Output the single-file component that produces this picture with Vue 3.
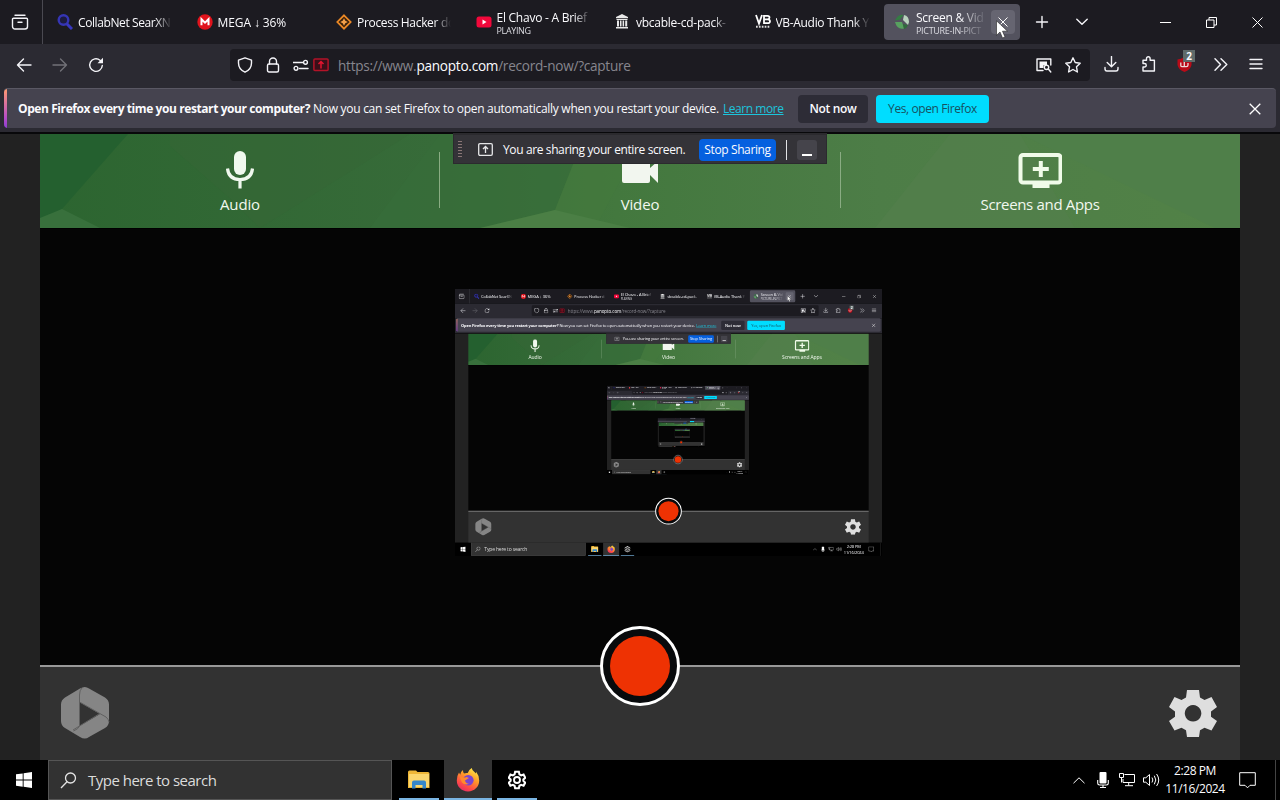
<script setup>
defineOptions({ name: 'DesktopScreen' })
const props = defineProps({ depth: { type: Number, default: 0 } })

const tabs = [
  { id: 'search', title: 'CollabNet SearXN', cls: 't-search' },
  { id: 'mega', title: 'MEGA ↓ 36%', cls: 't-mega' },
  { id: 'hacker', title: 'Process Hacker do', cls: 't-hacker' },
  { id: 'tube', title: 'El Chavo - A Brief', sub: 'PLAYING', cls: 't-tube' },
  { id: 'archive', title: 'vbcable-cd-pack-', cls: 't-archive' },
  { id: 'vb', title: 'VB-Audio Thank Y', cls: 't-vb' },
  { id: 'pan', title: 'Screen & Vid', sub: 'PICTURE-IN-PICT', cls: 't-pan', active: true },
]
</script>

<template>
  <div class="screen">
    <header class="tabbar">
      <div class="view">
        <svg width="18" height="18" viewBox="0 0 18 18" class="ln"><path d="M4 2.2h10M2.5 5.2h13a1 1 0 0 1 1 1v7.3a2.5 2.5 0 0 1-2.500 2.500h-10a2.500 2.500 0 0 1-2.500-2.500V6.200a1 1 0 0 1 1-1zM7 9.200h4" /></svg>
      </div>
      <div class="tabs">
        <div v-for="t in tabs" :key="t.id" class="tab" :class="{ active: t.active }">
          <svg class="fav" width="16" height="16" viewBox="0 0 16 16">
            <template v-if="t.id === 'search'">
              <circle cx="6.500" cy="6" r="4.800" fill="#1c1b40" stroke="#3535b4" stroke-width="2.400" /><path d="M10 10l5 5" stroke="#3838c0" stroke-width="3" />
            </template>
            <template v-else-if="t.id === 'mega'">
              <circle cx="8" cy="8" r="7.700" fill="#e0131c" /><path d="M4.500 11.300V5.200L8 8.600l3.500-3.400v6.100" fill="none" stroke="#fff" stroke-width="2" />
            </template>
            <template v-else-if="t.id === 'hacker'">
              <path d="M8 1.300L14.700 8 8 14.700 1.300 8z" fill="#3a210b" stroke="#ee8a26" stroke-width="1.700" /><path d="M8 4.200L9.300 6.700 11.800 8 9.300 9.300 8 11.800 6.700 9.300 4.200 8 6.700 6.700z" fill="#f3a04a" />
            </template>
            <template v-else-if="t.id === 'tube'">
              <rect x=".5" y="2.500" width="15" height="11" rx="2.500" fill="#f2083b" /><path d="M6.500 5.500v5l4-2.500z" fill="#fff" />
            </template>
            <template v-else-if="t.id === 'archive'">
              <path d="M7 0L13 3v1.200H1V3zM1.500 5h11v1h-11zM2 6.500h2v6H2zM5 6.500h1.500v6H5zM7.600 6.500h1.500v6H7.600zM10.200 6.500h2v6h-2zM1 13h12v1.500H1z" fill="#e8e8e8" />
            </template>
            <template v-else-if="t.id === 'vb'">
              <path d="M1 1l3 8.500L7 1M9 1.800h3.500q2 0 2 1.600T12.500 5.300H9M12.500 5.300q2.500 0 2.500 2T12.500 9.200H9V1" fill="none" stroke="#fff" stroke-width="1.800" /><path d="M1 12.800h14" stroke="#ddd" stroke-width="2" stroke-dasharray="1.700 1.200" />
            </template>
            <template v-else>
              <path d="M1 6.500Q4 0 9.500 1L6 5.500z" fill="#347c43" /><path d="M10 1q5 1 5 7l-1 3-5-5z" fill="#b9d2bd" /><path d="M1 8l7 0 2 6.500Q3 16 1 8z" fill="#57a15f" /><path d="M9 10l5 1q-1 3-4 4z" fill="#2f6b3b" />
            </template>
          </svg>
          <div class="lbl" :class="t.cls"><span class="ttl">{{ t.title }}</span><span v-if="t.sub" class="sub">{{ t.sub }}</span></div>
          <div v-if="t.active" class="tclose">
            <svg width="10" height="10" viewBox="0 0 10 10" class="thin"><path d="M.5.5l9 9M9.500.5l-9 9" /></svg>
          </div>
        </div>
      </div>
      <div class="tabtools">
        <svg width="14" height="14" viewBox="0 0 14 14" class="ln"><path d="M7 1.500v11M1.500 7h11" /></svg>
        <svg width="12" height="8" viewBox="0 0 12 8" class="ln"><path d="M.8 1.200L6 6.200l5.200-5" /></svg>
      </div>
      <div class="win">
        <svg width="11" height="11" viewBox="0 0 11 11" class="thin"><path d="M0 5.500h11" /></svg>
        <svg width="11" height="11" viewBox="0 0 11 11" class="thin"><path d="M.5 3h7.500v7.500H.5zM3 3V.5h7.500V8H8" /></svg>
        <svg width="11" height="11" viewBox="0 0 11 11" class="thin"><path d="M.5.5l10 10M10.500.5l-10 10" /></svg>
      </div>
    </header>

    <nav class="nav">
      <div class="navl">
        <svg width="16" height="16" viewBox="0 0 16 16" class="ln"><path d="M15 8H1.500M7.500 2L1.500 8l6 6" /></svg>
        <svg width="16" height="16" viewBox="0 0 16 16" class="ln dim"><path d="M1 8h13.500M8.500 2l6 6-6 6" /></svg>
        <svg width="16" height="16" viewBox="0 0 16 16" class="ln"><path d="M14.300 8.500A6.300 6.300 0 1 1 12 3.200l2 2" /><path d="M15 .8v5.500H9.500z" class="fill" /></svg>
      </div>
      <div class="url">
        <div class="uicons">
          <svg width="16" height="16" viewBox="0 0 16 16" class="ln"><path d="M8 .8l6.500 2.300V6c0 4-2.300 7.300-6.500 9.200C3.800 13.300 1.500 10 1.500 6V3.100z" /></svg>
          <svg width="14" height="16" viewBox="0 0 14 16" class="ln"><rect x="1.500" y="7" width="11" height="8" rx="1.500" /><path d="M3.500 7V4.500a3.500 3.500 0 0 1 7 0V7" /></svg>
          <svg width="16" height="12" viewBox="0 0 16 12" class="ln"><path d="M0 3.500h10M6.500 9.500H15" /><circle cx="12.500" cy="3.300" r="1.900" /><circle cx="3" cy="9.300" r="1.900" /></svg>
          <svg width="16" height="14" viewBox="0 0 16 14"><rect x=".9" y=".9" width="14.200" height="11.500" rx="1" fill="#3b0f19" stroke="#b31328" stroke-width="1.500" /><path d="M8 10.500V3.500M5.500 6L8 3.500 10.500 6" fill="none" stroke="#e3152f" stroke-width="1.500" /></svg>
        </div>
        <div class="address">https://www.<b>panopto.com</b>/record-now/?capture</div>
        <div class="uend">
          <svg width="16" height="16" viewBox="0 0 16 16" class="ln"><path d="M7 13.500H1V2h13.800v6" /><path d="M3.500 4.500H11v3.700H7.500V11h-4z" class="fill" /><circle cx="10.500" cy="10.300" r="2.200" /><path d="M12.300 12l2.500 3" /></svg>
          <svg width="16" height="16" viewBox="0 0 16 16" class="ln"><path d="M8 .8l2.200 4.700 5 .7-3.700 3.600.9 5.200L8 12.500 3.600 15l.9-5.200L.8 6.200l5-.7z" /></svg>
        </div>
      </div>
      <div class="navr">
        <svg width="15" height="16" viewBox="0 0 15 16" class="ln"><path d="M7.500.5v10M3.200 6.500l4.300 4.300 4.300-4.300M1 11.500v1.300q0 2.200 2 2.200h9q2 0 2-2.200v-1.300" /></svg>
        <svg width="15" height="16" viewBox="0 0 15 16" class="ln"><path d="M2 4.200h3.500V2.500a1.800 1.800 0 0 1 3.600 0v1.700h4.300V15H2v-4h1.500a1.700 1.700 0 0 0 0-3.500H2z" /></svg>
        <div class="ublock">
          <svg width="15" height="15" viewBox="0 0 15 15"><path d="M7.500 0Q11 2 14.500 2.500V8q-1 5-7 7-6-2-7-7V2.500Q4 2 7.500 0z" fill="#b90b18" /><path d="M3.800 5.500v3q0 1.200 1.500 1.200h4q1.700 0 1.700-1.700V6M7.300 5v4" fill="none" stroke="#eedada" stroke-width="1.300" /></svg>
          <span class="badge">2</span>
        </div>
        <svg width="14" height="13" viewBox="0 0 14 13" class="ln"><path d="M1 .7l5.500 5.800L1 12.300M7 .7l5.800 5.800L7 12.300" /></svg>
        <svg width="14" height="12" viewBox="0 0 14 12" class="ln"><path d="M1 1.500h12M1 6h12M1 10.500h12" /></svg>
      </div>
    </nav>

    <div class="notice">
      <div class="box">
        <strong class="nb">Open Firefox every time you restart your computer?</strong>
        <span class="nt">Now you can set Firefox to open automatically when you restart your device.</span>
        <a class="nl">Learn more</a>
        <button class="btn no"><span>Not now</span></button>
        <button class="btn yes"><span>Yes, open Firefox</span></button>
        <svg class="nx" width="12" height="12" viewBox="0 0 12 12"><path d="M.7.7l10.600 10.600M11.300.7L.7 11.300" /></svg>
      </div>
    </div>

    <main class="page">
      <section class="sources">
        <svg class="facets" viewBox="0 0 1200 94" preserveAspectRatio="none">
          <defs><linearGradient id="greens"><stop offset="0" stop-color="#2c6530" /><stop offset=".33" stop-color="#376b39" /><stop offset=".48" stop-color="#43783e" /><stop offset=".7" stop-color="#4d7d47" /><stop offset="1" stop-color="#528247" /></linearGradient></defs>
          <path d="M0 0h1200v94H0z" fill="url(#greens)" />
          <path d="M0 0h88L22 75 0 94z" fill="#24602f" />
          <path d="M0 94V84L22 75 60 94z" fill="#38703c" />
          <path d="M130 12L185 60 220 94 370 0H130z" fill="#356636" opacity=".5" />
          <path d="M400 0h145L515 76 440 94H330z" fill="#376d3a" opacity=".8" />
          <path d="M515 76L545 0h60l-50 94h-95z" fill="#457a3d" opacity=".6" />
          <path d="M515 76L590 94H440z" fill="#4b7f45" />
          <path d="M910 0L835 94h200L980 0z" fill="#527f4b" opacity=".7" />
          <path d="M980 0L1175 94H1200V0z" fill="#4f7f49" />
        </svg>
        <div class="source">
          <svg width="28" height="38" viewBox="0 0 28 38"><rect x="8" y="0" width="12" height="24" rx="6" fill="#f0f8ee" /><path d="M1.500 17.500q1 11 12.500 11t12.500-11M14 28v9.500" fill="none" stroke="#f0f8ee" stroke-width="3.200" /></svg>
          <span class="s1">Audio</span>
        </div>
        <div class="source">
          <svg width="36" height="38" viewBox="0 0 36 38"><path d="M2 7h24q2 0 2 2v8l8-7v22l-8-8v6q0 2-2 2H2q-2 0-2-2V9q0-2 2-2z" fill="#f2f6ef" /></svg>
          <span class="s2">Video</span>
        </div>
        <div class="source">
          <svg width="44" height="38" viewBox="0 0 44 38"><rect x="2.500" y="4" width="40" height="27.500" rx="2.500" fill="none" stroke="#f0fbe9" stroke-width="4" /><path d="M14.500 31h17v6h-17zM20.800 10h4v6h6v4h-6v6h-4v-6h-6v-4h6z" fill="#f0fbe9" /></svg>
          <span class="s3">Screens and Apps</span>
        </div>
      </section>
      <section class="preview">
        <div v-if="props.depth < 4" class="mirror"><DesktopScreen class="shrunk" :depth="props.depth + 1" /></div>
      </section>
      <footer class="controls">
        <svg width="50" height="54" viewBox="0 0 50 54"><path d="M20 2.500q5-3 9 0L45 11.500q4 2.500 4 7V35q0 4.500-4 7L29 51q-4 3-9 0L5 42q-4-2.500-4-7V18.500q0-4.500 4-7z" fill="#858585" /><path d="M19.500 16v24L40 28z" fill="#323232" /><path d="M22 2q-2.500 2-2.500 7v31q-1 3-6 5M19.500 16L46 31q2.500 2 3 5M39 28L13 44" fill="none" stroke="#606060" stroke-width="1" /></svg>
        <svg width="48" height="48" viewBox="0 0 48 48"><path fill-rule="evenodd" d="M18 1h12l1 7.500 4.500 2.600 7-3L48 18l-6 4.600v5.200L48 32l-5.500 9.500-7-2.800L31 41.300 30 48H18l-1-6.700-4.500-2.600-7 2.800L0 32l6-4.200v-5.200L0 18 5.500 8.100l7 3L17 8.500zM24 16a8.300 8.300 0 1 0 .1 0z" fill="#dedede" /></svg>
        <div class="rec"><i></i></div>
      </footer>

      <div class="sharing">
        <span class="grip"></span>
        <svg width="15" height="13" viewBox="0 0 15 13"><path d="M2 .7h11q1.300 0 1.300 1.300v9q0 1.300-1.300 1.300H2Q.7 12.300.7 11V2Q.7.7 2 .7zM7.500 10V3.500M5 6l2.500-2.500L10 6" fill="none" stroke="#e6e6e8" stroke-width="1.300" /></svg>
        <span class="stext">You are sharing your entire screen.</span>
        <button class="stop"><span>Stop Sharing</span></button>
        <span class="sep"></span>
        <span class="min"></span>
      </div>
    </main>

    <footer class="task">
      <div class="start"><svg width="16" height="16" viewBox="0 0 16 16"><path d="M0 2.300L6.700 1.400v6.200H0zM7.600 1.200L16 0v7.600H7.600zM0 8.500h6.700v6.200L0 13.800zM7.600 8.500H16V16l-8.400-1.200z" fill="#fff" /></svg></div>
      <div class="search">
        <svg width="17" height="17" viewBox="0 0 17 17"><circle cx="10.500" cy="6" r="5" fill="none" stroke="#e4e4e4" stroke-width="1.300" /><path d="M7 9.700L1 16" stroke="#e4e4e4" stroke-width="1.300" /></svg>
        <span>Type here to search</span>
      </div>
      <div class="apps">
        <div class="app">
          <svg width="22" height="20" viewBox="0 0 22 20"><path d="M0 2q0-1.500 1.500-1.500H8L9.500 2H20q1.500 0 1.500 1.500V18H0z" fill="#eeb637" /><path d="M1 4h20v13H1z" fill="#fbd66e" /><path d="M4 18.500v-6q0-2 2-2h10q2 0 2 2v6h-3.500V15h-7v3.500z" fill="#3687cb" /></svg>
        </div>
        <div class="app on">
          <svg width="24" height="24" viewBox="0 0 24 24">
            <defs><linearGradient id="fox" x1=".8" y1="0" x2=".25" y2="1"><stop offset="0" stop-color="#fff04c" /><stop offset=".4" stop-color="#ff9b28" /><stop offset=".75" stop-color="#ff4b47" /><stop offset="1" stop-color="#e42a67" /></linearGradient></defs>
            <path d="M12 23.500A11 11 0 0 1 .8 12.500Q.7 8 3 4.500l1.200 2.300Q4.600 3.500 7 2q-.2 2.200 1 3.500 1.500-.8 3.700-.5 1-3.200 4-5 .3 2 2.500 3.800L20 5.500q.2-1 0-2 3.200 4 3.200 9A11 11 0 0 1 12 23.500z" fill="url(#fox)" />
            <circle cx="12.300" cy="12.300" r="5.300" fill="#7a45d0" /><path d="M4 8q3 2.500 6.500 1l2.500 1-4 2.500q.5 3 4 3.300-4 2-7-1.300-2-3-2-6.500z" fill="#ff8a2d" />
          </svg>
        </div>
        <div class="app">
          <svg width="18" height="20" viewBox="0 0 48 50"><path fill="none" stroke="#fff" stroke-width="5.500" d="M19 3h10l1.500 7 4.500 2.600 6.500-2.300L46 19l-5 4.600v3.800L46 32l-4.500 8-6.500-2.200-4.500 2.600L29 47H19l-1.500-6.600-4.500-2.600L6.500 40 2 32l5-4.600v-3.800L2 19l4.500-8.700 6.500 2.300 4.500-2.600z" /><circle cx="24" cy="25" r="8" fill="none" stroke="#fff" stroke-width="5" /></svg>
        </div>
      </div>
      <div class="tray">
        <svg class="thin c1" width="12" height="7" viewBox="0 0 12 7"><path d="M.5 6.200L6 .8l5.500 5.400" /></svg>
        <svg class="c2" width="12" height="16" viewBox="0 0 12 16"><rect x="2.500" y="0" width="7" height="11.500" rx="1" fill="#fff" /><path d="M.7 8v3.300q0 1.700 2 1.700h6.600q2 0 2-1.700V8M6 13v3M3 15.500h6" fill="none" stroke="#fff" stroke-width="1.100" /></svg>
        <svg class="thin c3" width="16" height="14" viewBox="0 0 16 14"><path d="M5.500 1.500h10v8H4V6M6 12.700h8M9.700 9.500v3M.5.5h4v4h-4zM2.500 4.500v5" /></svg>
        <svg class="thin c4" width="17" height="14" viewBox="0 0 17 14"><path d="M.5 4.800h2.300L6.500 1.500v11L2.800 9.200H.5zM9 4.500q1.700 2.500 0 5M11.300 2.700q3 4.300 0 8.600M13.600 1q4.300 6 0 12" /></svg>
        <div class="clock"><span class="time">2:28 PM</span><span class="date">11/16/2024</span></div>
        <svg class="thin c5" width="17" height="17" viewBox="0 0 17 17"><path d="M.7.7h15.600v12.600h-5.300L8.500 15.800 6 13.300H.7z" /></svg>
      </div>
      <span class="desk"></span>
    </footer>

    <svg class="cursor" width="13" height="19" viewBox="0 0 13 19"><path d="M.5.800v14.500L4 12l2.500 6 2.500-1.100L6.500 11.200H11.500z" fill="#fff" stroke="#222" stroke-width=".6" /></svg>
  </div>
</template>

<style>
body { background: #000; overflow: hidden; }
</style>

<style scoped>
.screen { position: relative; width: 1280px; height: 800px; display: flex; flex-direction: column; overflow: hidden; background: #000; color: #fbfbfe; font: 12px/16px "Open Sans", "Noto Sans", sans-serif; white-space: nowrap; }
svg { display: block; flex: none; }
.ln { fill: none; stroke: #f4f4f8; stroke-width: 1.4; stroke-linecap: round; stroke-linejoin: round; }
.thin { fill: none; stroke: #fff; stroke-width: 1; }
.fill { fill: #f4f4f8; stroke: none; }
.dim { opacity: .35; }
button { border: 0; margin: 0; padding: 0; color: inherit; font: inherit; }

.tabbar { height: 44px; flex: none; display: flex; background: #1c1b21; }
.view { width: 43px; height: 44px; display: flex; align-items: center; padding-left: 11px; box-sizing: border-box; border-right: 1px solid #4a4951; }
.tabs { display: flex; padding: 4px 0 0 4px; }
.tab { width: 136px; margin-right: 3.5px; height: 36px; box-sizing: border-box; padding-left: 10px; display: flex; align-items: center; border-radius: 4px; position: relative; }
.tab.active { background: #53525e; }
.lbl { margin-left: 5px; width: 94px; display: flex; flex-direction: column; padding-top: 1px; mask-image: linear-gradient(90deg, #000 82%, transparent); }
.active .lbl { width: 71px; margin-left: 6px; mask-image: linear-gradient(90deg, #000 60%, transparent); }
.ttl { letter-spacing: -.25px; }
.t-search .ttl, .t-hacker .ttl { letter-spacing: -.4px; }
.t-mega .ttl { letter-spacing: -.1px; }
.t-hacker .ttl, .t-vb .ttl { letter-spacing: -.32px; }
.sub { font-size: 9px; line-height: 11px; letter-spacing: -.35px; color: #dcdce2; }
.t-tube .ttl, .t-pan .ttl { line-height: 15px; }
.t-pan .sub { letter-spacing: -.3px; }
.tclose { position: absolute; right: 5px; top: 6px; width: 24px; height: 24px; border-radius: 4px; background: #666571; display: flex; align-items: center; justify-content: center; }
.tabtools { display: flex; align-items: center; gap: 27px; margin-left: 11px; }
.win { display: flex; align-items: center; gap: 35px; margin: 0 17.500px 0 auto; }

.nav { height: 44px; flex: none; display: flex; align-items: center; background: #2b2a32; }
.navl { width: 230px; display: flex; gap: 20px; padding: 0 0 3px 16px; box-sizing: border-box; height: 40px; align-items: center; }
.url { width: 860px; height: 32px; margin-top: -2px; background: #1c1b21; border-radius: 4px; display: flex; align-items: center; box-sizing: border-box; padding: 0 9px 1px 7px; }
.uicons { display: flex; align-items: center; gap: 12px; }
.uicons svg:nth-child(2) { margin-left: 1px; }
.uicons svg:nth-child(3) { margin-left: 1px; }
.uicons svg:nth-child(4) { margin-left: -8px; }
.address { margin-left: 9px; font-size: 13.6px; line-height: 20px; color: #87868e; letter-spacing: -.26px; padding-top: 2px; }
.address b { font-weight: 400; color: #fbfbfe; }
.uend { margin-left: auto; display: flex; gap: 13px; }
.navr { flex: 1; display: flex; align-items: center; justify-content: space-between; padding: 0 17px 4px 14px; }
.ublock { position: relative; }
.badge { position: absolute; left: 6px; top: -7px; width: 12px; height: 12px; background: #5f6b6a; font: 700 10px/12px "Open Sans", sans-serif; text-align: center; }

.notice { height: 46px; flex: none; background: #2b2a32; box-sizing: border-box; padding: 0 4px; border-bottom: 2px solid #08080a; }
.box { height: 40px; display: flex; align-items: center; box-sizing: border-box; border-radius: 4px; background: linear-gradient(#ff9a70, #b64bc8 75%, #8b3fd0) 0 0 / 3px 100% no-repeat, #45434f; border-top: 1px solid #5a5864; padding: 1px 15px 0 14px; }
.nb { font-weight: 700; width: 295px; letter-spacing: -.41px; }
.nt { width: 410px; letter-spacing: -.28px; }
.nl { width: 75px; color: #1cc4dc; text-decoration: underline; letter-spacing: -.45px; }
.btn { height: 28px; border-radius: 4px; display: flex; align-items: center; justify-content: center; }
.no { width: 70px; background: #2d2c36; font-weight: 600; letter-spacing: -.3px; }
.yes { width: 113px; margin-left: 8px; background: #00ddff; color: #17515f; font-weight: 500; letter-spacing: -.4px; }
.nx { margin-left: auto; fill: none; stroke: #fff; stroke-width: 1.3; }

.page { position: relative; height: 626px; flex: none; padding: 0 40px; background: #222; }
.sources { position: relative; height: 94px; display: grid; grid-template-columns: repeat(3, 400px); }
.facets { position: absolute; inset: 0; width: 1200px; height: 94px; }
.source { position: relative; display: flex; flex-direction: column; align-items: center; padding-top: 17px; }
.source + .source::before { content: ""; position: absolute; left: 0; top: 18px; width: 1px; height: 56px; background: #8aac83; }
.source:nth-child(3)::before { left: -1px; }
.source span { margin-top: 5px; font-size: 15px; line-height: 20px; letter-spacing: -.15px; color: #f2f8ef; }
.source .s3 { letter-spacing: -.33px; }
.preview { position: relative; height: 437px; background: #050505; box-shadow: inset 0 1px #000; }
.mirror { position: absolute; left: 415px; top: 61px; width: 427px; height: 267px; overflow: hidden; }
.shrunk { transform: scale(.3336); transform-origin: 0 0; }
.controls { position: relative; height: 95px; box-sizing: border-box; border-top: 2px solid #999; background: #323232; display: flex; align-items: center; justify-content: space-between; padding: 0 23px 2px 20px; }
.rec { position: absolute; left: 560px; top: -41px; width: 80px; height: 80px; box-sizing: border-box; border: 3px solid #fff; border-radius: 50%; background: #080a0c; padding: 7px; }
.rec i { display: block; height: 100%; border-radius: 50%; background: #ee3203; }

.sharing { position: absolute; left: 453px; top: 0; width: 374px; height: 30px; box-sizing: border-box; background: #343338; border: 1px solid #2b2a2e; box-shadow: 0 -1px #2b2a2e; display: flex; align-items: center; padding: 1px 0 0 4px; }
.grip { width: 4px; height: 17px; margin-right: 16px; background: repeating-linear-gradient(#8a7676 0 1px, transparent 1px 3px); }
.stext { width: 196px; margin-left: 10px; letter-spacing: -.38px; }
.stop { width: 77px; height: 22px; border-radius: 4px; background: #0560df; letter-spacing: -.38px; }
.sep { width: 1px; height: 20px; margin-left: 10px; background: #e2e2e4; }
.min { width: 20px; height: 20px; margin-left: 10px; border-radius: 3px; background: linear-gradient(#fff, #fff) 5px 14px / 10px 2px no-repeat, #45444b; }

.task { height: 40px; flex: none; display: flex; background: #000; }
.start { width: 48px; display: flex; align-items: center; justify-content: center; }
.search { width: 344px; box-sizing: border-box; border: 1px solid #555; background: #323232; display: flex; align-items: center; padding-left: 11px; font-size: 15px; color: #dcdcdc; }
.search span { margin-left: 11px; letter-spacing: -.51px; }
.apps { display: flex; margin-left: 3px; gap: 1px; }
.app { width: 48px; display: flex; align-items: center; justify-content: center; background: linear-gradient(#7ab5e3, #7ab5e3) 50% 100% / 40px 2px no-repeat; }
.app.on { background: linear-gradient(#7ab5e3, #7ab5e3) 50% 100% / 48px 2px no-repeat, #333; }
.tray { margin-left: auto; display: flex; align-items: center; }
.c2 { margin-left: 12px; }
.c3 { margin-left: 10px; }
.c4 { margin-left: 8px; }
.clock { width: 58px; margin-left: 6px; display: flex; flex-direction: column; align-items: center; line-height: 18px; letter-spacing: -.42px; }
.c5 { margin-left: 14.500px; }
.desk { width: 1px; margin: 0 4px 0 19.500px; background: #444; }
.cursor { position: absolute; left: 996px; top: 20px; }
</style>
